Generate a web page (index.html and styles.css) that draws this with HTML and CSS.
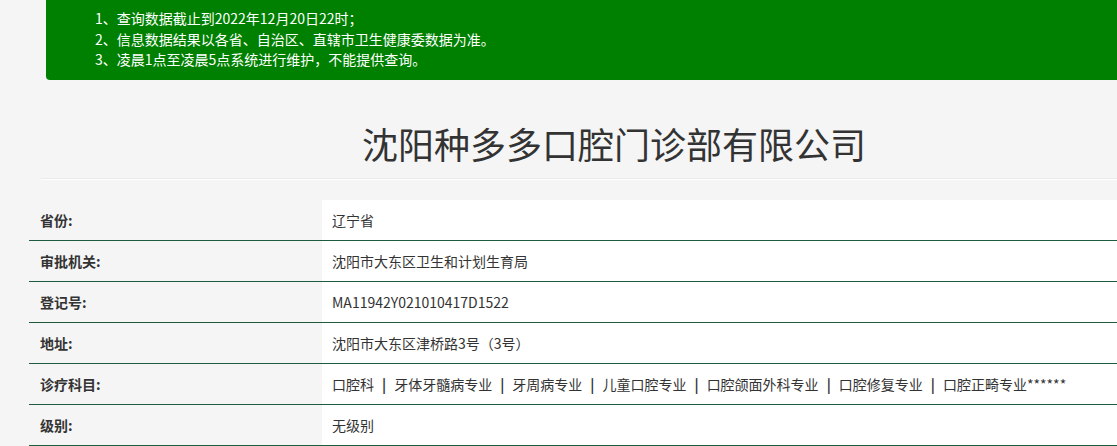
FILE: index.html
```html
<!DOCTYPE html>
<html lang="zh-CN">
<head>
<meta charset="utf-8">
<title>沈阳种多多口腔门诊部有限公司</title>
<link rel="stylesheet" href="styles.css">
</head>
<body>
<div class="page">
  <div class="notice">
    <p>1、查询数据截止到2022年12月20日22时；</p>
    <p>2、信息数据结果以各省、自治区、直辖市卫生健康委数据为准。</p>
    <p>3、凌晨1点至凌晨5点系统进行维护，不能提供查询。</p>
  </div>
  <h1 class="title">沈阳种多多口腔门诊部有限公司</h1>
  <div class="rule"></div>
  <table class="info">
    <tr><th>省份:</th><td>辽宁省</td></tr>
    <tr><th>审批机关:</th><td>沈阳市大东区卫生和计划生育局</td></tr>
    <tr><th>登记号:</th><td>MA11942Y021010417D1522</td></tr>
    <tr><th>地址:</th><td>沈阳市大东区津桥路3号（3号）</td></tr>
    <tr><th>诊疗科目:</th><td>口腔科<span class="sep">|</span>牙体牙髓病专业<span class="sep">|</span>牙周病专业<span class="sep">|</span>儿童口腔专业<span class="sep">|</span>口腔颌面外科专业<span class="sep">|</span>口腔修复专业<span class="sep">|</span>口腔正畸专业******</td></tr>
    <tr><th>级别:</th><td>无级别</td></tr>
  </table>
</div>
</body>
</html>
```

FILE: styles.css
```css
html, body {
  margin: 0;
  padding: 0;
  background: #f5f5f5;
  overflow: hidden;
}
body {
  font-family: "Noto Sans CJK SC", "Microsoft YaHei", sans-serif;
  color: #333;
}
.page {
  width: 100%;
}
.notice {
  margin-left: 46px;
  height: 80px;
  box-sizing: border-box;
  padding: 8px 0 0 49px;
  background: #008000;
  border-radius: 0 0 0 4px;
  color: #fff;
  font-size: 14px;
  line-height: 20.5px;
}
.notice p {
  margin: 0;
}
.title {
  margin: 43px 0 0 43px;
  padding-left: 68px;
  text-align: center;
  font-size: 36px;
  font-weight: normal;
  line-height: 40px;
  color: #333;
}
.rule {
  margin: 15px 0 0 41px;
  border-top: 1px solid #e9e9e9;
  border-bottom: 1px solid #fff;
}
.info {
  margin: 20px 0 0 29px;
  width: calc(100% - 29px);
  border-collapse: collapse;
  font-size: 14px;
}
.info tr {
  border-bottom: 1px solid #1f5b3d;
}
.info th {
  width: 293px;
  box-sizing: border-box;
  height: 40px;
  padding: 0 11px;
  text-align: left;
  font-weight: bold;
  color: #333;
  background: #f5f5f5;
}
.info td {
  height: 40px;
  padding: 0 10px;
  background: #fff;
  color: #333;
  white-space: nowrap;
}
.sep {
  font-weight: bold;
  margin: 0 8px;
}
```
